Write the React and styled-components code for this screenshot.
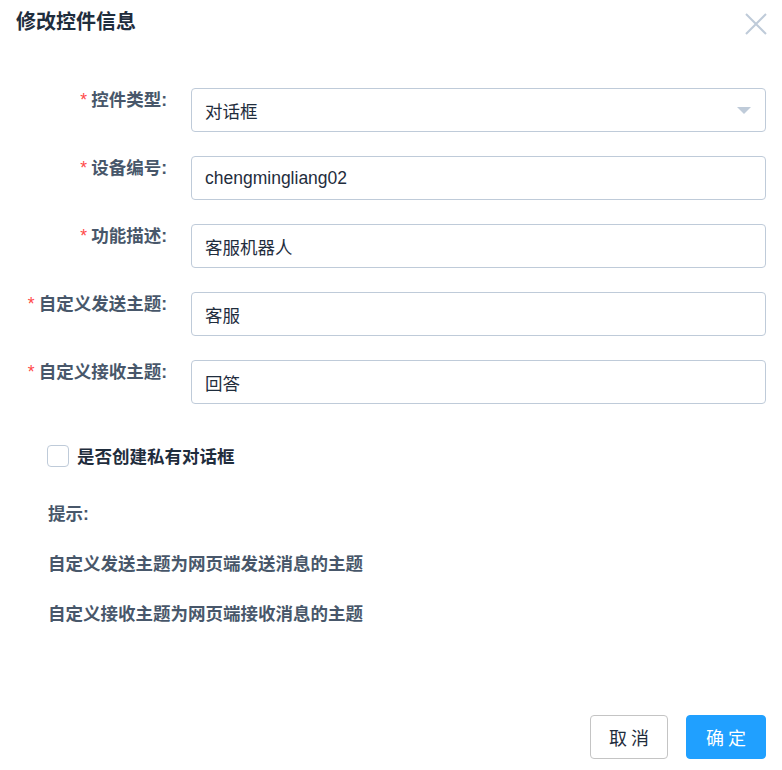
import React from 'react';
import styled, { createGlobalStyle } from 'styled-components';

const GlobalStyle = createGlobalStyle`
  html, body {
    margin: 0;
    padding: 0;
    background: #fff;
  }
  body {
    font-family: "Liberation Sans", "Noto Sans CJK SC", sans-serif;
  }
  * {
    box-sizing: border-box;
  }
`;

const Dialog = styled.div`
  width: 782px;
  height: 770px;
  display: flex;
  flex-direction: column;
  background: #fff;
`;

const Header = styled.div`
  display: flex;
  align-items: flex-start;
  justify-content: space-between;
  padding: 10px 15px 0 16px;
  height: 46px;
`;

const Title = styled.h2`
  margin: 0;
  font-size: 20px;
  font-weight: 700;
  color: #1f2d3d;
  line-height: 24px;
`;

const CloseButton = styled.button`
  border: none;
  background: none;
  padding: 0;
  margin-top: 3px;
  width: 22px;
  height: 22px;
  cursor: pointer;
  display: flex;
  align-items: center;
  justify-content: center;
`;

const Form = styled.div`
  padding: 42px 16px 0 0;
  display: flex;
  flex-direction: column;
  gap: 24px;
`;

const Row = styled.div`
  display: flex;
  align-items: flex-start;
`;

const Label = styled.label`
  width: 191px;
  flex-shrink: 0;
  padding-right: 24px;
  text-align: right;
  font-size: 17.5px;
  font-weight: 700;
  color: #48576a;
  line-height: 24px;
`;

const Star = styled.span`
  color: #ff4949;
  margin-right: 4px;
  font-weight: 400;
`;

const InputBox = styled.div`
  position: relative;
  flex: 1;
  height: 44px;
  border: 1px solid #bfcbd9;
  border-radius: 4px;
  display: flex;
  align-items: center;
  padding: 0 13px;
  font-size: 17.5px;
  color: #1f2d3d;
  background: #fff;
`;

const Arrow = styled.span`
  position: absolute;
  right: 14px;
  top: 18px;
  width: 0;
  height: 0;
  border-left: 7px solid transparent;
  border-right: 7px solid transparent;
  border-top: 7px solid #bfcbd9;
`;

const CheckRow = styled.label`
  display: flex;
  align-items: center;
  gap: 8px;
  margin: 39px 0 0 47px;
  font-size: 17.5px;
  font-weight: 700;
  color: #1f2d3d;
  cursor: pointer;
`;

const Box = styled.span`
  width: 22px;
  height: 22px;
  border: 1px solid #bfcbd9;
  border-radius: 4px;
  background: #fff;
`;

const Hints = styled.div`
  margin: 21px 0 0 48px;
  display: flex;
  flex-direction: column;
`;

const Hint = styled.p`
  margin: 0;
  font-size: 17.5px;
  font-weight: 700;
  color: #48576a;
  line-height: 50px;
`;

const Footer = styled.div`
  margin-top: auto;
  display: flex;
  justify-content: flex-end;
  gap: 18px;
  padding: 0 16px 11px 0;
`;

const Button = styled.button`
  height: 44px;
  width: ${p => (p.$primary ? '80px' : '78px')};
  border-radius: 4px;
  border: 1px solid ${p => (p.$primary ? '#20a0ff' : '#c4c4c4')};
  background: ${p => (p.$primary ? '#20a0ff' : '#fff')};
  color: ${p => (p.$primary ? '#fff' : '#1f2d3d')};
  font-family: "Noto Sans CJK SC", sans-serif;
  font-size: 18px;
  letter-spacing: 4px;
  padding: 0 0 0 4px;
  cursor: pointer;
`;

const fields = [
  { label: '控件类型', value: '对话框', select: true },
  { label: '设备编号', value: 'chengmingliang02' },
  { label: '功能描述', value: '客服机器人' },
  { label: '自定义发送主题', value: '客服' },
  { label: '自定义接收主题', value: '回答' },
];

export default function App() {
  return (
    <Dialog>
      <GlobalStyle />
      <Header>
        <Title>修改控件信息</Title>
        <CloseButton aria-label="关闭">
          <svg width="22" height="22" viewBox="0 0 22 22">
            <path d="M1 1 L21 21 M21 1 L1 21" stroke="#bfcbd9" strokeWidth="2" fill="none" />
          </svg>
        </CloseButton>
      </Header>
      <Form>
        {fields.map(f => (
          <Row key={f.label}>
            <Label>
              <Star>*</Star>
              {f.label}:
            </Label>
            <InputBox>
              {f.value}
              {f.select && <Arrow />}
            </InputBox>
          </Row>
        ))}
      </Form>
      <CheckRow>
        <Box />
        是否创建私有对话框
      </CheckRow>
      <Hints>
        <Hint>提示:</Hint>
        <Hint>自定义发送主题为网页端发送消息的主题</Hint>
        <Hint>自定义接收主题为网页端接收消息的主题</Hint>
      </Hints>
      <Footer>
        <Button>取消</Button>
        <Button $primary>确定</Button>
      </Footer>
    </Dialog>
  );
}
